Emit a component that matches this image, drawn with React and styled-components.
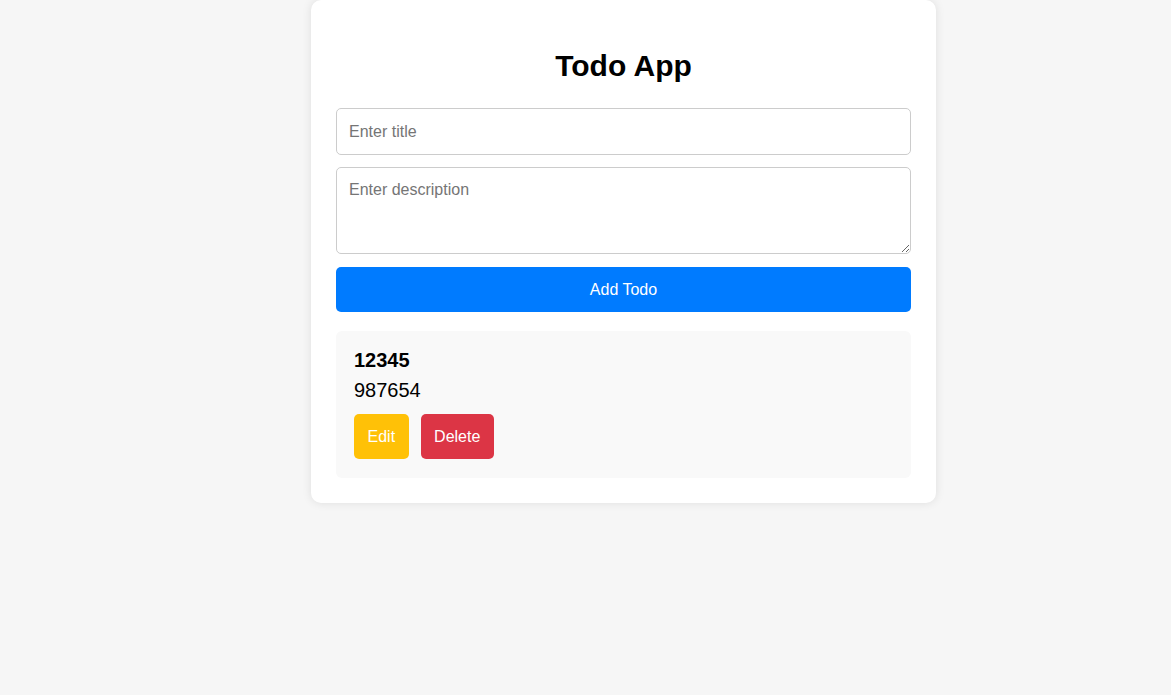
import React from 'react';
import styled, { createGlobalStyle } from 'styled-components';

const GlobalStyle = createGlobalStyle`
    body {
        margin: 0;
        background: #f6f6f6;
        font-family: "Liberation Sans", Arial, sans-serif;
    }
`;

const App = () => {
  return (
    <Page>
        <GlobalStyle />
        <Card>
            <Title>Todo App</Title>
            <TitleInput placeholder="Enter title" />
            <DescInput placeholder="Enter description" />
            <AddButton>Add Todo</AddButton>
            <TodoItem>
                <TodoTitle>12345</TodoTitle>
                <TodoDesc>987654</TodoDesc>
                <Actions>
                    <ActionButton color="#ffc107">Edit</ActionButton>
                    <ActionButton color="#dc3545">Delete</ActionButton>
                </Actions>
            </TodoItem>
        </Card>
    </Page>
  )
}

export default App

const Page = styled.div`
    display: flex;
    align-items: flex-start;
    padding-left: 311px;
    min-height: 695px;
`;

const Card = styled.div`
    width: 625px;
    box-sizing: border-box;
    padding: 25px;
    background: #fff;
    border-radius: 10px;
    box-shadow: 0 0 10px rgba(0, 0, 0, 0.1);
    display: flex;
    flex-direction: column;
`;

const Title = styled.h1`
    margin: 24px 0 25px;
    font-size: 30px;
    text-align: center;
    color: #000;
`;

const fieldStyles = `
    width: 100%;
    box-sizing: border-box;
    padding: 12px;
    border: 1px solid #ccc;
    border-radius: 5px;
    font-size: 16px;
    font-family: "Liberation Sans", Arial, sans-serif;
    &::placeholder { color: #757575; }
`;

const TitleInput = styled.input`
    ${fieldStyles}
    height: 47px;
`;

const DescInput = styled.textarea`
    ${fieldStyles}
    height: 87px;
    margin-top: 12px;
    padding-top: 13px;
    display: block;
`;

const AddButton = styled.button`
    margin-top: 13px;
    height: 45px;
    border: none;
    border-radius: 5px;
    background: #007bff;
    color: #fff;
    font-size: 16px;
    font-family: "Liberation Sans", Arial, sans-serif;
`;

const TodoItem = styled.div`
    margin-top: 19px;
    padding: 18px 18px 19px;
    background: #f9f9f9;
    border-radius: 6px;
`;

const TodoTitle = styled.h3`
    margin: 0;
    font-size: 20px;
`;

const TodoDesc = styled.p`
    margin: 7px 0 12px;
    font-size: 20px;
`;

const Actions = styled.div`
    display: flex;
    gap: 12px;
`;

const ActionButton = styled.button`
    height: 45px;
    padding: 0 13.5px;
    border: none;
    border-radius: 5px;
    background: ${props => props.color};
    color: #fff;
    font-size: 16px;
    font-family: "Liberation Sans", Arial, sans-serif;
`;
